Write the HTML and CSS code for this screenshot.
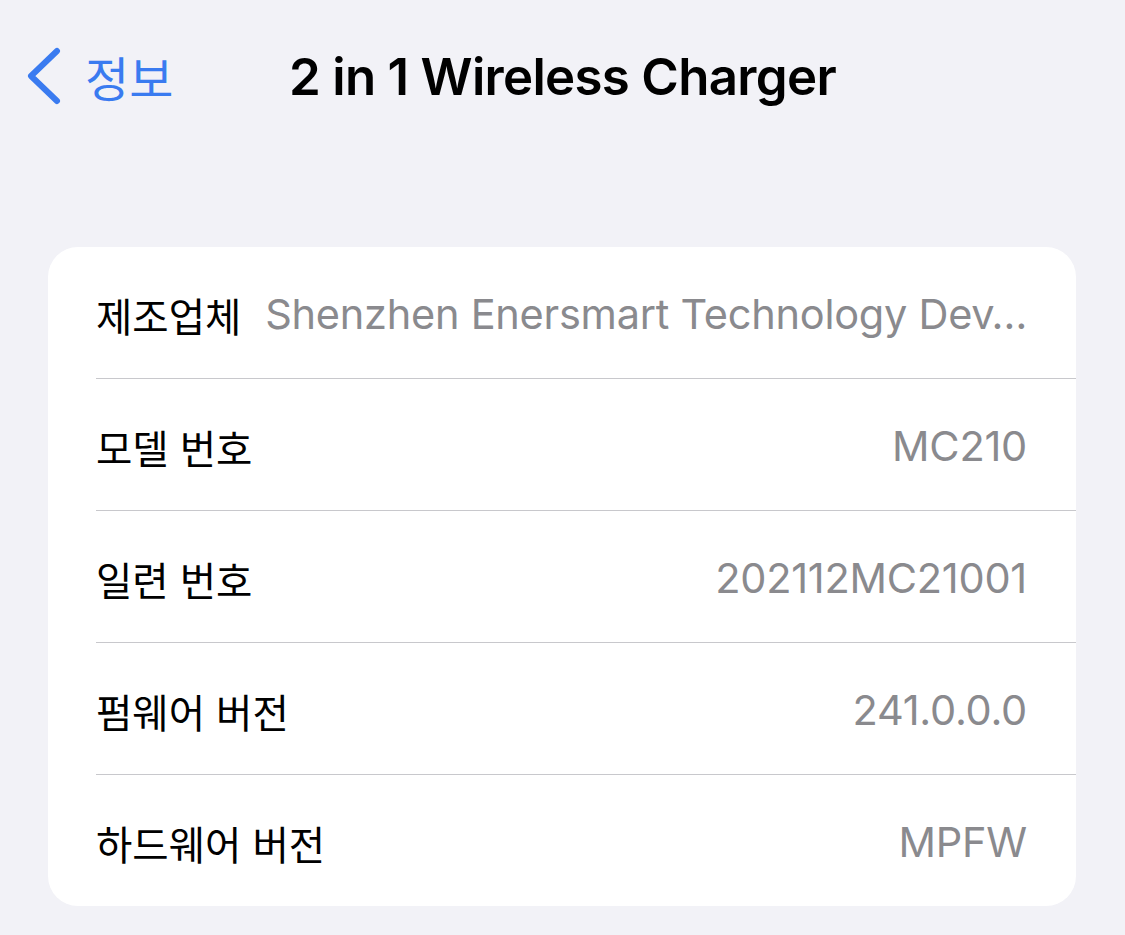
FILE: index.html
```html
<!DOCTYPE html>
<html lang="ko">
  <head>
    <meta charset="utf-8">
    <title>2 in 1 Wireless Charger</title>
    <link rel="stylesheet" href="styles.css">
  </head>
  <body>
    <!-- 상단 내비게이션 -->
    <div class="nav">
      <a class="back" href="#">
        <svg class="chevron" viewBox="0 0 34 58" width="34" height="58">
          <path d="M30 4 L4 29 L30 54" fill="none" stroke="#3a7bf0" stroke-width="6" stroke-linecap="round" stroke-linejoin="round"/>
        </svg>
        <span>정보</span>
      </a>
      <div class="title">2 in 1 Wireless Charger</div>
      <div></div>
    </div>

    <!-- 기기 정보 -->
    <div class="content">
      <div class="card">
        <div class="row">
          <span class="label">제조업체</span>
          <span class="value">Shenzhen Enersmart Technology Dev…</span>
        </div>
        <div class="row">
          <span class="label">모델 번호</span>
          <span class="value">MC210</span>
        </div>
        <div class="row">
          <span class="label">일련 번호</span>
          <span class="value">202112MC21001</span>
        </div>
        <div class="row">
          <span class="label">펌웨어 버전</span>
          <span class="value">241.0.0.0</span>
        </div>
        <div class="row">
          <span class="label">하드웨어 버전</span>
          <span class="value">MPFW</span>
        </div>
      </div>
    </div>
  </body>
</html>
```

FILE: styles.css
```css
body {
  margin: 0;
  background-color: #f2f2f7;
  font-family: "Inter", "Noto Sans CJK KR", sans-serif;
  color: #000;
}

/* 내비게이션 바 */
.nav {
  display: grid;
  grid-template-columns: 1fr auto 1fr;
  align-items: center;
  height: 152px;
}

.back {
  display: flex;
  align-items: center;
  gap: 24px;
  padding-left: 27px;
  color: #3a7bf0;
  text-decoration: none;
  font-family: "Noto Sans CJK KR", sans-serif;
  font-size: 48px;
}

.chevron {
  display: block;
}

.title {
  font-size: 51px;
  font-weight: 600;
  letter-spacing: -0.7px;
}

/* 카드 */
.content {
  padding: 95px 49px 0 48px;
}

.card {
  background-color: #fff;
  border-radius: 30px;
  overflow: hidden;
}

.row {
  display: flex;
  align-items: center;
  height: 131px;
  margin-left: 48px;
  padding: 3px 49px 0 0;
  box-sizing: border-box;
}

.row + .row {
  border-top: 1px solid #c8c8cc;
  height: 132px;
}

.label {
  font-family: "Noto Sans CJK KR", sans-serif;
  font-size: 39.5px;
  white-space: nowrap;
}

.value {
  flex: 1;
  min-width: 0;
  margin-left: 18px;
  text-align: right;
  white-space: nowrap;
  overflow: hidden;
  text-overflow: ellipsis;
  font-size: 41.5px;
  letter-spacing: -0.25px;
  color: #8a8a8e;
}
```
